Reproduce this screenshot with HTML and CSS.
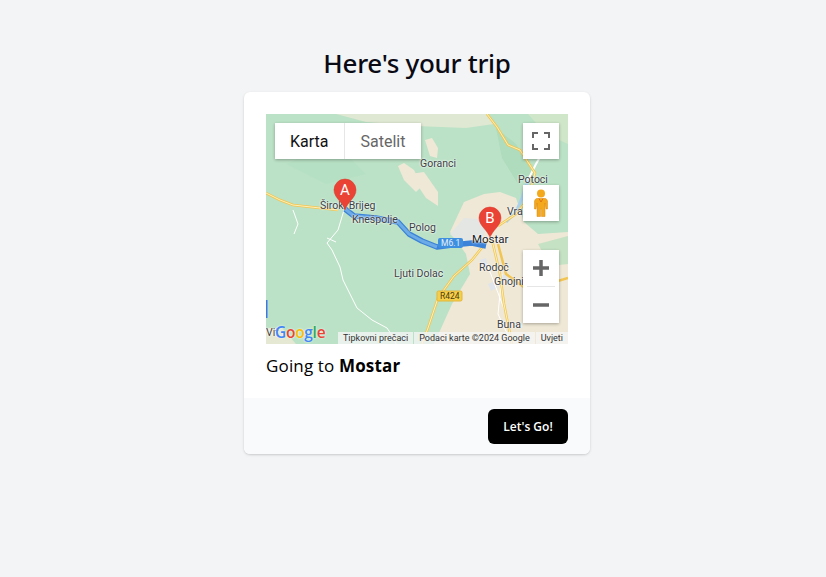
FILE: index.html
```html
<!DOCTYPE html>
<html lang="en">
<head>
    <meta charset="UTF-8">
    <meta name="viewport" content="width=device-width, initial-scale=1.0">
    <title>Here's your trip</title>
    <link rel="stylesheet" href="styles.css">
</head>
<body>
    <h1 class="title">Here's your trip</h1>
    <div class="card">
        <div class="card-body">
            <div class="map">
                <svg class="map-base" width="302" height="230" viewBox="0 0 302 230">
                    <rect width="302" height="230" fill="#bbe2c6"/>
                    <!-- darker hills -->
                    <path d="M230 14 L250 30 L268 60 L252 70 L236 44 Z" fill="#aedcbc"/>
                    <path d="M20 50 L70 30 L100 60 L60 70 Z" fill="#b6e0c3"/>
                    <!-- urban / bare land -->
                    <path d="M184 118 L198 88 L218 80 L234 78 L250 84 L258 108 L272 120 L302 118 L302 230 L168 230 L186 190 L204 160 L200 140 Z" fill="#efe8d6"/>
                    <path d="M272 130 L302 122 L302 150 L284 152 Z" fill="#c6e2c4"/>
                    <path d="M196 132 L184 120 L198 104 L224 106 L214 130 Z" fill="#e4e6e4"/>
                    <path d="M70 0 L220 0 L228 10 L200 14 L150 12 L100 8 Z" fill="#dfe8d2"/>
                    <path d="M132 52 L138 49 L148 56 L156 72 L150 78 L138 66 Z" fill="#efe8d6"/>
                    <path d="M159 26 L166 24 L172 34 L171 44 L164 42 Z" fill="#efe8d6"/>
                    <path d="M144 60 L158 58 L172 78 L172 92 L160 84 Z" fill="#efe8d6"/>
                    <path d="M262 0 L302 0 L302 30 L280 20 Z" fill="#cfe6c8"/>
                    <path d="M0 214 L16 214 L30 230 L0 230 Z" fill="#e5e8d2"/>
                    <!-- city blocks -->
                    <path d="M214 146 l6 -2 l2 8 l-6 2 Z M222 170 l7 -3 l2 7 l-6 3 Z M234 162 l6 -2 l2 6 l-6 2 Z" fill="#dfe5ea"/>
                    <!-- small roads -->
                    <path d="M78 96 L72 116 L61 129 L66 136 L74 153 L77 166 L91 194 L106 206 L121 214 L127 223 L130 230" fill="none" stroke="#fff" stroke-width="1"/>
                    <path d="M61 124 L70 128 M27 96 L32 110 L28 120" fill="none" stroke="#fff" stroke-width="1"/>
                    <path d="M278 36 L270 50 L262 66" fill="none" stroke="#fff" stroke-width="2"/>
                    <path d="M221 150 L240 200 M236 160 L232 200 L246 230" fill="none" stroke="#fff" stroke-width="1"/>
                    <!-- river -->
                    <path d="M262 66 L256 84 L250 98 L240 108" fill="none" stroke="#a9d1ee" stroke-width="3"/>
                    <!-- main roads -->
                    <g fill="none" stroke="#f2c552" stroke-width="2.500">
                        <path d="M0 79 L14 86 L27 91 L54 94 L72 96"/>
                        <path d="M221 0 L231 13 L242 31 L254 36 L269 59 L262 85 L250 100 L232 112"/>
                        <path d="M222 126 L206 146 L188 162 L172 184 L162 214 L156 230"/>
                        <path d="M226 126 L234 160 L238 190 L246 230"/>
                        <path d="M232 130 L240 160 L262 176 L302 164"/>
                    </g>
                    <g fill="none" stroke="#fdf0b8" stroke-width="1">
                        <path d="M0 79 L14 86 L27 91 L54 94 L72 96"/>
                        <path d="M221 0 L231 13 L242 31 L254 36 L269 59 L262 85 L250 100 L232 112"/>
                        <path d="M222 126 L206 146 L188 162 L172 184 L162 214 L156 230"/>
                        <path d="M226 126 L234 160 L238 190 L246 230"/>
                    </g>
                    <!-- route -->
                    <path d="M79 95 L88 102 L110 104 L132 108 L143 120 L156 127 L171 133 L186 131 L206 129 L220 132" fill="none" stroke="#3b82d8" stroke-width="5.500" stroke-linejoin="round"/>
                    <path d="M79 95 L88 102 L110 104 L132 108 L143 120 L156 127 L171 133" fill="none" stroke="#6cabe6" stroke-width="3" stroke-linejoin="round"/>
                    <rect x="0" y="186" width="1.500" height="18" fill="#3b78e7"/>
                    <!-- route shields -->
                    <rect x="172" y="124" width="25" height="10" rx="2" fill="#3f8fe0"/>
                    <rect x="171" y="177" width="25" height="10" rx="1.500" fill="#f6cf4a" stroke="#e3b53a"/>
                </svg>

                <span class="place place-a">Široki Brijeg</span>
                <span class="place place-b">Knešpolje</span>
                <span class="place place-c">Goranci</span>
                <span class="place place-d">Polog</span>
                <span class="place place-e">Ljuti Dolac</span>
                <span class="place place-f">Potoci</span>
                <span class="place place-g">Vra</span>
                <span class="place place-h">Rodoč</span>
                <span class="place place-i">Gnojni</span>
                <span class="place place-j">Buna</span>
                <span class="place place-k">Vit</span>
                <span class="shield shield-m">M6.1</span>
                <span class="shield shield-r">R424</span>

                <svg class="pin pin-a" width="24" height="33" viewBox="0 0 24 33"><path d="M12 32 C10 24 1 20 1 12 A11 11 0 1 1 23 12 C23 20 14 24 12 32 Z" fill="#ea4335" stroke="#d63a2c" stroke-width=".5"/></svg>
                <span class="pin-letter letter-a">A</span>
                <svg class="pin pin-b" width="24" height="33" viewBox="0 0 24 33"><path d="M12 32 C10 24 1 20 1 12 A11 11 0 1 1 23 12 C23 20 14 24 12 32 Z" fill="#ea4335" stroke="#d63a2c" stroke-width=".5"/></svg>
                <span class="pin-letter letter-b">B</span>
                <span class="place city">Mostar</span>

                <div class="map-type">
                    <span class="map-type-item active">Karta</span>
                    <span class="map-type-item">Satelit</span>
                </div>
                <button class="map-btn btn-full" type="button" aria-label="Fullscreen">
                    <svg width="18" height="18" viewBox="0 0 18 18"><path d="M1 6V1h5M12 1h5v5M17 12v5h-5M6 17H1v-5" fill="none" stroke="#666" stroke-width="2"/></svg>
                </button>
                <button class="map-btn btn-peg" type="button" aria-label="Street View">
                    <svg width="14" height="28" viewBox="0 0 14 28">
                        <circle cx="7" cy="4.500" r="4" fill="#f4a81c"/>
                        <path d="M2.500 9.500 H11.500 Q13 10 13.500 12 V20 H12 L11 14 V27.500 H7.500 V20 H6.500 V27.500 H3 V14 L2 20 H.500 V12 Q1 10 2.500 9.500 Z" fill="#f4a81c" stroke="#d9860c" stroke-width=".5"/>
                        <path d="M5 9.500 L7 13 L9 9.500" fill="none" stroke="#d9660c" stroke-width=".8"/>
                    </svg>
                </button>
                <div class="zoom-box">
                    <button class="zoom-btn" type="button" aria-label="Zoom in">
                        <svg width="18" height="18" viewBox="0 0 18 18"><path d="M1 9H17M9 1V17" stroke="#666" stroke-width="3.500"/></svg>
                    </button>
                    <div class="zoom-line"></div>
                    <button class="zoom-btn" type="button" aria-label="Zoom out">
                        <svg width="18" height="18" viewBox="0 0 18 18"><path d="M1 9H17" stroke="#666" stroke-width="3.500"/></svg>
                    </button>
                </div>
                <div class="google-logo"><span class="g-b">G</span><span class="g-r">o</span><span class="g-y">o</span><span class="g-b">g</span><span class="g-g">l</span><span class="g-r">e</span></div>
                <div class="attribution">
                    <span>Tipkovni prečaci</span>
                    <span>Podaci karte ©2024 Google</span>
                    <span>Uvjeti</span>
                </div>
            </div>
            <p class="going">Going to <strong>Mostar</strong></p>
        </div>
        <div class="card-footer">
            <button class="go-btn" type="button">Let's Go!</button>
        </div>
    </div>
</body>
</html>
```

FILE: styles.css
```css
html, body {
    height: 100%;
}
body {
    margin: 0;
    padding-left: 8px;
    box-sizing: border-box;
    background: #f3f4f6;
    font-family: 'Open Sans', 'Noto Sans', sans-serif;
    color: #000;
    display: flex;
    flex-direction: column;
    align-items: center;
}
.title {
    margin: 43px 0 9px;
    font-family: 'Noto Sans', sans-serif;
    font-size: 26px;
    line-height: 40px;
    font-weight: 500;
    letter-spacing: -0.3px;
    color: #0a0a14;
}
.card {
    width: 346px;
    background: white;
    border-radius: 6px;
    overflow: hidden;
    box-shadow: 0 1px 3px rgba(0,0,0,0.12), 0 1px 2px rgba(0,0,0,0.06);
}
.card-body {
    padding: 22px 22px 20px;
}
.map {
    position: relative;
    width: 302px;
    height: 230px;
    overflow: hidden;
    font-family: Roboto, sans-serif;
}
.map-base {
    display: block;
}
.place {
    position: absolute;
    font-size: 10.5px;
    line-height: 12px;
    color: #3c4043;
    text-shadow: 0 0 2px #fff, 0 0 2px #fff;
    white-space: nowrap;
}
.place-a { left: 54px; top: 86px; }
.place-b { left: 86px; top: 100px; }
.place-c { left: 154px; top: 44px; }
.place-d { left: 143px; top: 108px; }
.place-e { left: 128px; top: 154px; }
.place-f { left: 252px; top: 60px; }
.place-g { left: 241px; top: 92px; }
.place-h { left: 213px; top: 148px; }
.place-i { left: 228px; top: 162px; }
.place-j { left: 231px; top: 205px; }
.place-k { left: 0; top: 213px; }
.city { left: 206px; top: 119px; font-size: 11.5px; color: #202124; }
.shield {
    position: absolute;
    font-size: 8.5px;
    line-height: 10px;
    white-space: nowrap;
}
.shield-m { left: 175px; top: 124px; color: #e3f0fc; }
.shield-r { left: 174px; top: 177px; color: #4a3c10; }
.pin {
    position: absolute;
    display: block;
}
.pin-a { left: 67px; top: 64px; }
.pin-b { left: 212px; top: 92px; }
.pin-letter {
    position: absolute;
    width: 24px;
    text-align: center;
    color: #fff;
    font-size: 15px;
    line-height: 16px;
}
.letter-a { left: 67px; top: 68px; }
.letter-b { left: 212px; top: 96px; }
.map-type {
    position: absolute;
    left: 9px;
    top: 9px;
    display: flex;
    height: 36px;
    background: white;
    box-shadow: 0 1px 3px rgba(0,0,0,0.3);
}
.map-type-item {
    display: flex;
    align-items: center;
    padding: 0 16px;
    font-size: 16px;
    color: #666;
}
.map-type-item.active {
    padding: 0 15px;
    color: #111;
    border-right: 1px solid #e6e6e6;
}
.map-btn {
    position: absolute;
    left: 257px;
    width: 36px;
    height: 36px;
    padding: 0;
    border: none;
    background: white;
    display: flex;
    align-items: center;
    justify-content: center;
    box-shadow: 0 1px 3px rgba(0,0,0,0.3);
}
.btn-full { top: 9px; }
.btn-peg { top: 71px; }
.zoom-box {
    position: absolute;
    left: 257px;
    top: 136px;
    width: 36px;
    background: white;
    box-shadow: 0 1px 3px rgba(0,0,0,0.3);
}
.zoom-btn {
    display: flex;
    align-items: center;
    justify-content: center;
    width: 36px;
    height: 36px;
    padding: 0;
    border: none;
    background: none;
}
.zoom-line {
    height: 1px;
    margin: 0 4px;
    background: #e6e6e6;
}
.google-logo {
    position: absolute;
    left: 9px;
    top: 208px;
    font-family: 'Open Sans', sans-serif;
    font-size: 15.5px;
    line-height: 20px;
    font-weight: 600;
    letter-spacing: -0.3px;
    text-shadow: 0 0 2px #fff;
}
.g-b { color: #4285f4; }
.g-r { color: #ea4335; }
.g-y { color: #fbbc05; }
.g-g { color: #34a853; }
.attribution {
    position: absolute;
    right: 0;
    bottom: 0;
    display: flex;
    height: 12px;
    gap: 1px;
    font-size: 9px;
    line-height: 12px;
    color: #333;
}
.attribution span {
    padding: 0 5px;
    background: rgba(245,245,245,0.8);
    white-space: nowrap;
}
.going {
    margin: 10px 0 0;
    font-size: 17px;
    line-height: 24px;
    letter-spacing: 0.15px;
}
.going strong {
    font-weight: 700;
}
.card-footer {
    display: flex;
    justify-content: flex-end;
    padding: 11px 22px 10px;
    background: #f9fafb;
}
.go-btn {
    height: 35px;
    width: 80px;
    padding: 0;
    border: none;
    border-radius: 6px;
    background: #000;
    color: white;
    font-family: 'Open Sans', sans-serif;
    font-size: 12px;
    font-weight: 600;
}
```
